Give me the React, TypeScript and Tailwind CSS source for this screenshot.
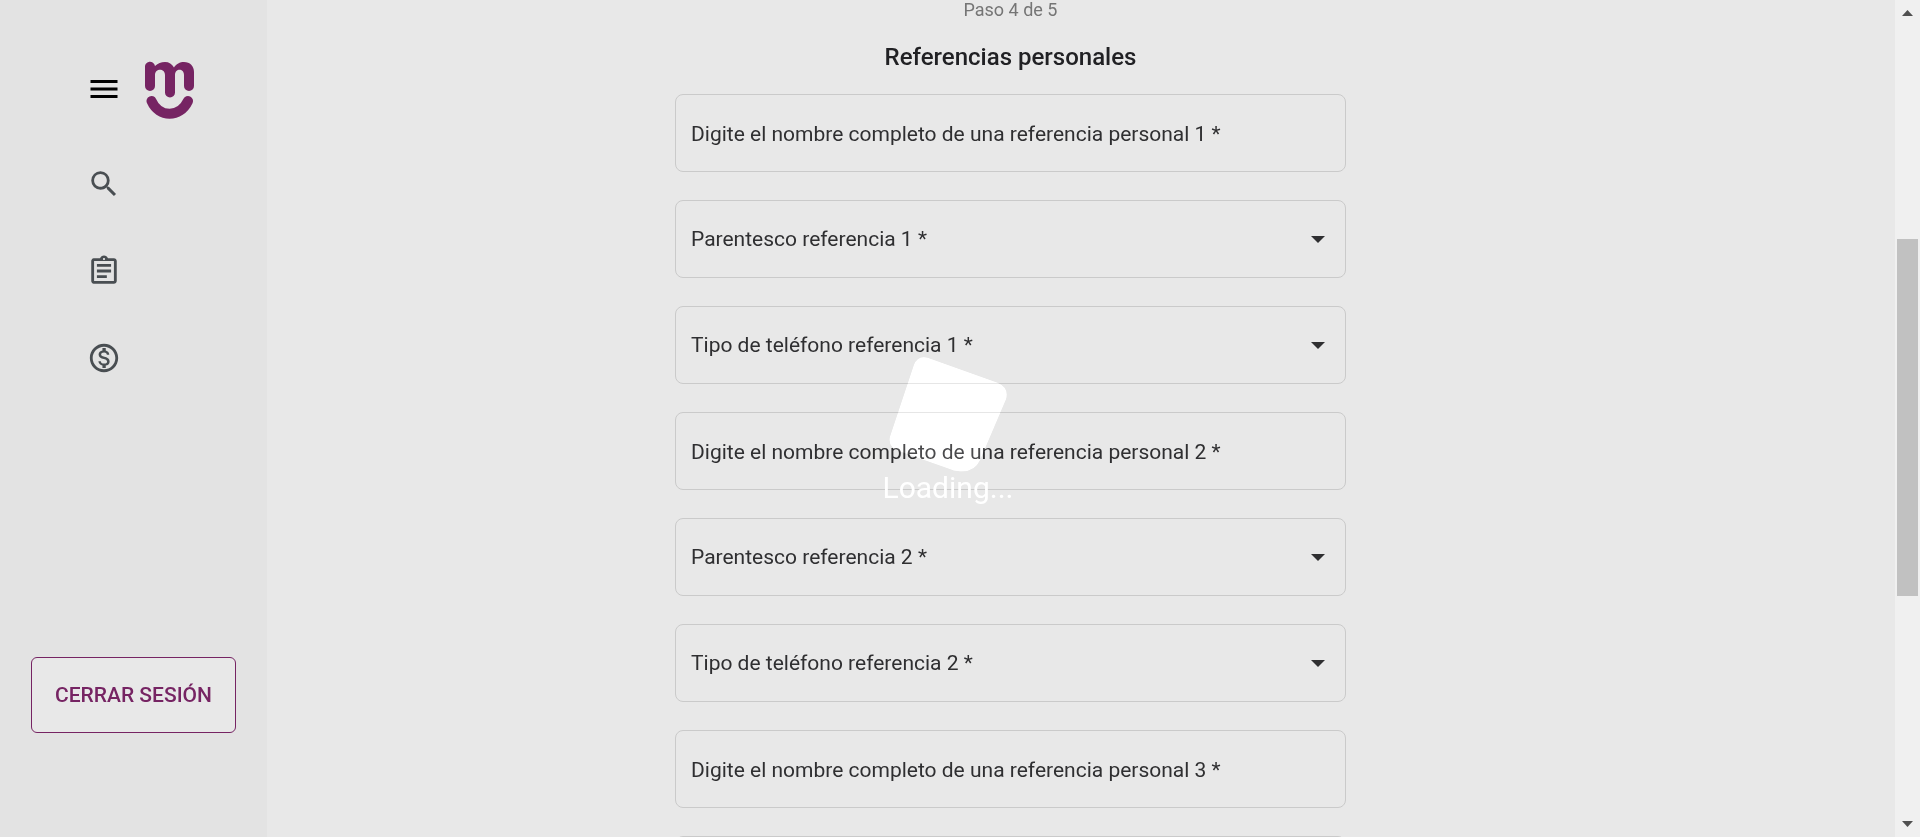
import React from "react";
import { MdMenu, MdSearch, MdOutlineAssignment, MdOutlineMonetizationOn } from "react-icons/md";

type Field = { id: string; label: string; kind: "text" | "select" };

const fields: Field[] = [
  { id: "nombre1", label: "Digite el nombre completo de una referencia personal 1 *", kind: "text" },
  { id: "parentesco1", label: "Parentesco referencia 1 *", kind: "select" },
  { id: "telefono1", label: "Tipo de teléfono referencia 1 *", kind: "select" },
  { id: "nombre2", label: "Digite el nombre completo de una referencia personal 2 *", kind: "text" },
  { id: "parentesco2", label: "Parentesco referencia 2 *", kind: "select" },
  { id: "telefono2", label: "Tipo de teléfono referencia 2 *", kind: "select" },
  { id: "nombre3", label: "Digite el nombre completo de una referencia personal 3 *", kind: "text" },
  { id: "parentesco3", label: "Parentesco referencia 3 *", kind: "select" },
];

const box =
  "block h-[78px] w-full appearance-none rounded-lg border border-[#cacaca] bg-transparent px-[15px] pt-[2px] text-[21px] text-[#2f2f31] placeholder:text-[#2f2f31] placeholder:opacity-100 outline-none";

function FormField({ field }: { field: Field }) {
  if (field.kind === "text") {
    return <input id={field.id} type="text" aria-label={field.label} placeholder={field.label} className={box} />;
  }
  return (
    <div className="relative">
      <select id={field.id} aria-label={field.label} className={box} defaultValue="">
        <option value="">{field.label}</option>
      </select>
      <svg viewBox="0 0 14 7" aria-hidden="true" className="pointer-events-none absolute top-[36px] right-[21px] h-[7px] w-[14px] fill-[#2f2f31]">
        <path d="M0 0h14L7 7z" />
      </svg>
    </div>
  );
}

function Logo() {
  return (
    <svg viewBox="0 -1 50 60" className="h-[60px] w-[50px]" aria-label="Logo" role="img">
      <path
        fill="#762463"
        d="M0 7.500A5 5 0 0 1 10 6C13 3.500 16 2 20 2C24 2 27 4 29 7.500C31 4 35 2 39 2C45 2 49 6 49 12V26a5 5 0 0 1-10 0V15C39 8 30 8 30 15V32.500a5 5 0 0 1-10 0V15C20 8 10 8 10 15V26a5 5 0 0 1-10 0z"
      />
      <path fill="none" stroke="#762463" strokeWidth="10" strokeLinecap="round" d="M6.500 41C14 58 35 58 43 41" />
    </svg>
  );
}

function Loader() {
  return (
    <div role="status" className="pointer-events-none absolute top-[350px] left-[882px] flex flex-col items-center">
      <svg viewBox="0 0 132 125" aria-hidden="true" className="h-[125px] w-[132px] fill-[#1c1c1c] mix-blend-plus-lighter">
        <path d="M46 8L116 33Q127 38 124 49L98 110Q92 123 76 121Q72 121 68 119L17 101Q6 97 8 87L32 15Q36 5 46 8z" />
      </svg>
      <span className="-mt-[5px] text-[30px] leading-9 text-white">Loading...</span>
    </div>
  );
}

export default function App() {
  return (
    <div className="relative flex h-screen overflow-hidden bg-[#e8e8e8] font-[Roboto,sans-serif]">
      <aside className="flex w-[267px] shrink-0 flex-col bg-[#e3e3e3] px-[31px] pt-[59px] pb-[104px]">
        <div className="flex items-center gap-[23px] pl-[55px]">
          <button type="button" aria-label="Menú"><MdMenu className="size-9 text-black" /></button>
          <Logo />
        </div>
        <nav className="mt-12 flex flex-col gap-[53px] pl-[56px] text-[#494e52]">
          <a href="#buscar" aria-label="Buscar"><MdSearch className="size-[34px]" /></a>
          <a href="#solicitudes" aria-label="Solicitudes"><MdOutlineAssignment className="size-[34px]" /></a>
          <a href="#pagos" aria-label="Pagos"><MdOutlineMonetizationOn className="size-[34px]" /></a>
        </nav>
        <button type="button" className="mt-auto h-[76px] rounded-md border border-[#762463] bg-[#e8e8e8] pt-[2px] text-[21px] font-medium text-[#762463]">
          CERRAR SESIÓN
        </button>
      </aside>
      <main className="flex min-w-0 flex-1 flex-col items-center pr-[141px]">
        <p className="text-[18px] leading-5 text-[#757575]">Paso 4 de 5</p>
        <h1 className="mt-[23px] mb-[23px] text-[24px] leading-7 font-medium text-[#212124]">Referencias personales</h1>
        <form className="flex w-full max-w-[671px] flex-col gap-7">
          {fields.map((f) => <FormField key={f.id} field={f} />)}
        </form>
      </main>
      <div aria-hidden="true" className="flex w-[25px] shrink-0 flex-col items-center bg-[#f0f0f0]">
        <svg viewBox="0 0 11 6" className="mt-[10px] h-[6px] w-[11px] fill-[#505050]"><path d="M5.500 0L11 6H0z" /></svg>
        <div className="mt-[223px] h-[357px] w-[21px] bg-[#c1c1c1]" />
        <svg viewBox="0 0 11 6" className="mt-auto mb-[10px] h-[6px] w-[11px] fill-[#505050]"><path d="M0 0h11L5.500 6z" /></svg>
      </div>
      <Loader />
    </div>
  );
}
